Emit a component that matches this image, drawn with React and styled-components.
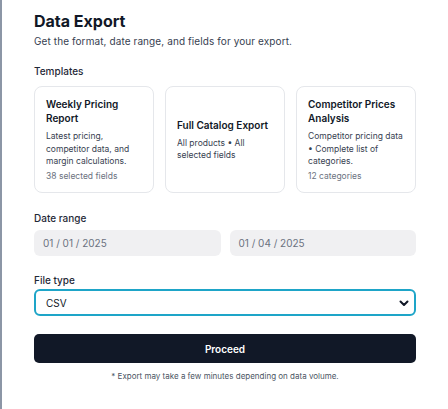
import styled, { createGlobalStyle } from "styled-components";

const GlobalStyle = createGlobalStyle`
  * { box-sizing: border-box; }
  html, body { margin: 0; padding: 0; background: #ffffff; }
  body { font-family: Inter, "Noto Sans", sans-serif; color: #111827; }
`;

const templates = [
  {
    title: "Weekly Pricing Report",
    description: "Latest pricing, competitor data, and margin calculations.",
    meta: "38 selected fields",
  },
  {
    title: "Full Catalog Export",
    description: "All products • All selected fields",
    centered: true,
  },
  {
    title: "Competitor Prices Analysis",
    description: "Competitor pricing data • Complete list of categories.",
    meta: "12 categories",
  },
];

const Chevron = () => (
  <svg width="12" height="12" viewBox="0 0 24 24" fill="none" stroke="#111827" strokeWidth="4" strokeLinecap="round" strokeLinejoin="round">
    <path d="M5 9l7 7 7-7" />
  </svg>
);

const App = () => {
  return (
    <>
      <GlobalStyle />
      <Page>
        <Panel>
          <Title>Data Export</Title>
          <Subtitle>Get the format, date range, and fields for your export.</Subtitle>

          <Label>Templates</Label>
          <CardGrid>
            {templates.map((t) => (
              <Card key={t.title} $centered={t.centered}>
                <CardTitle>{t.title}</CardTitle>
                <CardText>{t.description}</CardText>
                {t.meta && <CardMeta>{t.meta}</CardMeta>}
              </Card>
            ))}
          </CardGrid>

          <Label $top={18}>Date range</Label>
          <DateRow>
            <DateField>01 / 01 / 2025</DateField>
            <DateField>01 / 04 / 2025</DateField>
          </DateRow>

          <Label $top={17}>File type</Label>
          <Select>
            <span>CSV</span>
            <Chevron />
          </Select>

          <Button>Proceed</Button>
          <Note>* Export may take a few minutes depending on data volume.</Note>
        </Panel>
      </Page>
    </>
  );
};

const Page = styled.div`
  min-height: 409px;
  border-left: 2px solid #8c96a6;
  background: #ffffff;
`;

const Panel = styled.div`
  padding: 10px 32px 20px 32px;
  display: flex;
  flex-direction: column;
`;

const Title = styled.h1`
  margin: 0;
  font-size: 16px;
  line-height: 22px;
  font-weight: 700;
  color: #111827;
`;

const Subtitle = styled.p`
  margin: 2px 0 0;
  font-size: 10px;
  line-height: 14px;
  letter-spacing: 0.1px;
  color: #374151;
`;

const Label = styled.div`
  margin-top: ${(p) => p.$top ?? 16}px;
  font-size: 10px;
  line-height: 14px;
  font-weight: 500;
  color: #1f2937;
`;

const CardGrid = styled.div`
  margin-top: 8px;
  display: grid;
  grid-template-columns: repeat(3, 1fr);
  gap: 11px;
`;

const Card = styled.div`
  height: 107px;
  border: 1px solid #e5e7eb;
  border-radius: 8px;
  padding: 10px 11px;
  display: flex;
  flex-direction: column;
  justify-content: ${(p) => (p.$centered ? "center" : "flex-start")};
`;

const CardTitle = styled.div`
  font-size: 10px;
  line-height: 14px;
  font-weight: 600;
  color: #111827;
  margin-bottom: 5px;
`;

const CardText = styled.div`
  font-size: 8.5px;
  line-height: 12.5px;
  color: #374151;
`;

const CardMeta = styled.div`
  margin-top: 2px;
  font-size: 8.5px;
  line-height: 12.5px;
  color: #6b7280;
`;

const DateRow = styled.div`
  margin-top: 5px;
  display: grid;
  grid-template-columns: 1fr 1fr;
  gap: 9px;
`;

const DateField = styled.div`
  height: 26px;
  border-radius: 6px;
  background: #f0f0f2;
  padding: 0 9px;
  display: flex;
  align-items: center;
  font-size: 10px;
  color: #6b7280;
`;

const Select = styled.div`
  margin-top: 2px;
  height: 27px;
  border: 2px solid #1ea5c8;
  border-radius: 6px;
  padding: 0 4px 0 10px;
  display: flex;
  align-items: center;
  justify-content: space-between;
  font-size: 10px;
  color: #111827;
`;

const Button = styled.button`
  margin-top: 18px;
  height: 29px;
  border: none;
  border-radius: 5px;
  background: #111827;
  color: #ffffff;
  font-family: inherit;
  font-size: 10px;
  font-weight: 600;
  cursor: pointer;
`;

const Note = styled.p`
  margin: 8px 0 0;
  text-align: center;
  font-size: 8px;
  line-height: 11px;
  color: #4b5563;
`;

export default App;
